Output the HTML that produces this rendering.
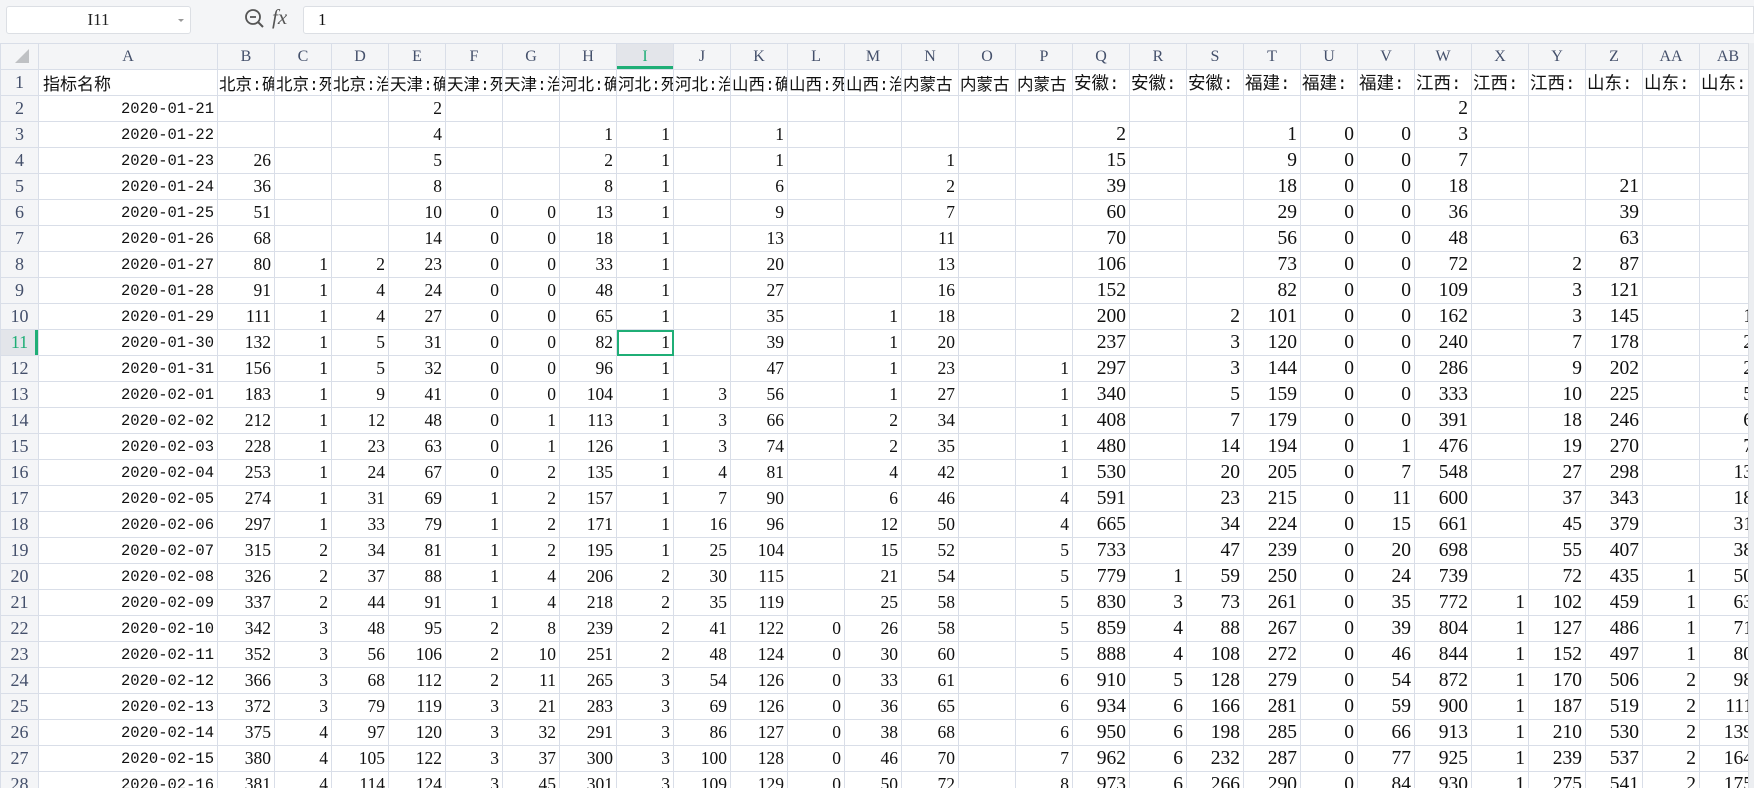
<!DOCTYPE html>
<html><head><meta charset="utf-8">
<style>
*{margin:0;padding:0;box-sizing:border-box}
body{width:1754px;height:788px;overflow:hidden;background:#f4f5f7;position:relative;font-family:"Liberation Serif","Noto Serif CJK SC",serif}
.namebox{position:absolute;left:6px;top:6px;width:185px;height:28px;background:#fff;border:1px solid #dcdfe4;border-radius:3px;font:17px "Liberation Serif",serif;text-align:center;line-height:26px;color:#222}
.namebox .arr{position:absolute;right:6px;top:12px;width:0;height:0;border-left:3px solid transparent;border-right:3px solid transparent;border-top:3px solid #999}
.fx{position:absolute;left:272px;top:5px;font:italic 21px "Liberation Serif",serif;color:#555}
.fbox{position:absolute;left:303px;top:6px;right:0;height:28px;background:#fff;border:1px solid #dcdfe4;border-radius:3px 0 0 3px;font:17px "Liberation Serif",serif;line-height:26px;padding-left:14px;color:#111}
.grid{position:absolute;left:0;top:43px;width:1748px;height:745px;overflow:hidden;background:#fff}
table{border-collapse:collapse;table-layout:fixed;width:1756px}
tr{height:26px}
td,th{border:1px solid #d9dee8;padding:0 3px;white-space:nowrap;overflow:hidden;text-align:right;font:17.5px "Liberation Serif",serif;color:#111;height:26px}
th{background:#f4f5f7;font-weight:normal;text-align:center;color:#44506b;font-size:18px}
thead th{font-size:16px}
td:nth-child(2){font:15.5px "Liberation Mono",monospace}
td:nth-child(n+18){font-size:19.5px}
tr.h td{text-align:left;font:16.5px "Liberation Mono","Noto Sans CJK SC",monospace;padding:0 1px}
tr.h td:nth-child(n+18){font:17.5px "Liberation Mono","Noto Sans CJK SC",monospace}
tr.h td:nth-child(2){font:17px "Liberation Sans","Noto Sans CJK SC",sans-serif;padding-left:4px}
th.sel{background:#e3e5ea;color:#1fae76}
thead th.sel{box-shadow:inset 0 -3px 0 #1fae76}
tbody th.sel{box-shadow:inset -3px 0 0 #1fae76}
td.cur{outline:2px solid #1fae76;outline-offset:-2px;position:relative}
.corner{position:absolute;left:14px;top:5px;width:0;height:0;border-left:14px solid transparent;border-bottom:14px solid #bfc1c4}
.sb{position:absolute;left:1748px;top:43px;width:6px;height:745px;background:#eceef1;border-left:1px solid #dcdfe4}
</style></head><body>
<div class="namebox">I11<span class="arr"></span></div>
<svg style="position:absolute;left:244px;top:8px" width="22" height="22" viewBox="0 0 22 22"><circle cx="9" cy="9" r="7" fill="none" stroke="#555" stroke-width="1.8"/><line x1="6" y1="9" x2="12" y2="9" stroke="#555" stroke-width="1.8"/><line x1="14" y1="14" x2="19" y2="19" stroke="#555" stroke-width="2"/></svg>
<div class="fx">fx</div>
<div class="fbox">1</div>
<div class="grid">
<table>
<colgroup><col style="width:38px"><col style="width:179px"><col span="27" style="width:57px"></colgroup>
<thead><tr><th style="position:relative"><span class="corner"></span></th><th>A</th><th>B</th><th>C</th><th>D</th><th>E</th><th>F</th><th>G</th><th>H</th><th class="sel">I</th><th>J</th><th>K</th><th>L</th><th>M</th><th>N</th><th>O</th><th>P</th><th>Q</th><th>R</th><th>S</th><th>T</th><th>U</th><th>V</th><th>W</th><th>X</th><th>Y</th><th>Z</th><th>AA</th><th>AB</th></tr></thead>
<tbody>
<tr class="h"><th>1</th><td>指标名称</td><td>北京:确诊</td><td>北京:死亡</td><td>北京:治愈</td><td>天津:确诊</td><td>天津:死亡</td><td>天津:治愈</td><td>河北:确诊</td><td>河北:死亡</td><td>河北:治愈</td><td>山西:确诊</td><td>山西:死亡</td><td>山西:治愈</td><td>内蒙古</td><td>内蒙古</td><td>内蒙古</td><td>安徽:</td><td>安徽:</td><td>安徽:</td><td>福建:</td><td>福建:</td><td>福建:</td><td>江西:</td><td>江西:</td><td>江西:</td><td>山东:</td><td>山东:</td><td>山东:</td></tr>
<tr><th>2</th><td>2020-01-21</td><td></td><td></td><td></td><td>2</td><td></td><td></td><td></td><td></td><td></td><td></td><td></td><td></td><td></td><td></td><td></td><td></td><td></td><td></td><td></td><td></td><td></td><td>2</td><td></td><td></td><td></td><td></td><td></td></tr>
<tr><th>3</th><td>2020-01-22</td><td></td><td></td><td></td><td>4</td><td></td><td></td><td>1</td><td>1</td><td></td><td>1</td><td></td><td></td><td></td><td></td><td></td><td>2</td><td></td><td></td><td>1</td><td>0</td><td>0</td><td>3</td><td></td><td></td><td></td><td></td><td></td></tr>
<tr><th>4</th><td>2020-01-23</td><td>26</td><td></td><td></td><td>5</td><td></td><td></td><td>2</td><td>1</td><td></td><td>1</td><td></td><td></td><td>1</td><td></td><td></td><td>15</td><td></td><td></td><td>9</td><td>0</td><td>0</td><td>7</td><td></td><td></td><td></td><td></td><td></td></tr>
<tr><th>5</th><td>2020-01-24</td><td>36</td><td></td><td></td><td>8</td><td></td><td></td><td>8</td><td>1</td><td></td><td>6</td><td></td><td></td><td>2</td><td></td><td></td><td>39</td><td></td><td></td><td>18</td><td>0</td><td>0</td><td>18</td><td></td><td></td><td>21</td><td></td><td></td></tr>
<tr><th>6</th><td>2020-01-25</td><td>51</td><td></td><td></td><td>10</td><td>0</td><td>0</td><td>13</td><td>1</td><td></td><td>9</td><td></td><td></td><td>7</td><td></td><td></td><td>60</td><td></td><td></td><td>29</td><td>0</td><td>0</td><td>36</td><td></td><td></td><td>39</td><td></td><td></td></tr>
<tr><th>7</th><td>2020-01-26</td><td>68</td><td></td><td></td><td>14</td><td>0</td><td>0</td><td>18</td><td>1</td><td></td><td>13</td><td></td><td></td><td>11</td><td></td><td></td><td>70</td><td></td><td></td><td>56</td><td>0</td><td>0</td><td>48</td><td></td><td></td><td>63</td><td></td><td></td></tr>
<tr><th>8</th><td>2020-01-27</td><td>80</td><td>1</td><td>2</td><td>23</td><td>0</td><td>0</td><td>33</td><td>1</td><td></td><td>20</td><td></td><td></td><td>13</td><td></td><td></td><td>106</td><td></td><td></td><td>73</td><td>0</td><td>0</td><td>72</td><td></td><td>2</td><td>87</td><td></td><td></td></tr>
<tr><th>9</th><td>2020-01-28</td><td>91</td><td>1</td><td>4</td><td>24</td><td>0</td><td>0</td><td>48</td><td>1</td><td></td><td>27</td><td></td><td></td><td>16</td><td></td><td></td><td>152</td><td></td><td></td><td>82</td><td>0</td><td>0</td><td>109</td><td></td><td>3</td><td>121</td><td></td><td></td></tr>
<tr><th>10</th><td>2020-01-29</td><td>111</td><td>1</td><td>4</td><td>27</td><td>0</td><td>0</td><td>65</td><td>1</td><td></td><td>35</td><td></td><td>1</td><td>18</td><td></td><td></td><td>200</td><td></td><td>2</td><td>101</td><td>0</td><td>0</td><td>162</td><td></td><td>3</td><td>145</td><td></td><td>1</td></tr>
<tr><th class="sel">11</th><td>2020-01-30</td><td>132</td><td>1</td><td>5</td><td>31</td><td>0</td><td>0</td><td>82</td><td class="cur">1</td><td></td><td>39</td><td></td><td>1</td><td>20</td><td></td><td></td><td>237</td><td></td><td>3</td><td>120</td><td>0</td><td>0</td><td>240</td><td></td><td>7</td><td>178</td><td></td><td>2</td></tr>
<tr><th>12</th><td>2020-01-31</td><td>156</td><td>1</td><td>5</td><td>32</td><td>0</td><td>0</td><td>96</td><td>1</td><td></td><td>47</td><td></td><td>1</td><td>23</td><td></td><td>1</td><td>297</td><td></td><td>3</td><td>144</td><td>0</td><td>0</td><td>286</td><td></td><td>9</td><td>202</td><td></td><td>2</td></tr>
<tr><th>13</th><td>2020-02-01</td><td>183</td><td>1</td><td>9</td><td>41</td><td>0</td><td>0</td><td>104</td><td>1</td><td>3</td><td>56</td><td></td><td>1</td><td>27</td><td></td><td>1</td><td>340</td><td></td><td>5</td><td>159</td><td>0</td><td>0</td><td>333</td><td></td><td>10</td><td>225</td><td></td><td>5</td></tr>
<tr><th>14</th><td>2020-02-02</td><td>212</td><td>1</td><td>12</td><td>48</td><td>0</td><td>1</td><td>113</td><td>1</td><td>3</td><td>66</td><td></td><td>2</td><td>34</td><td></td><td>1</td><td>408</td><td></td><td>7</td><td>179</td><td>0</td><td>0</td><td>391</td><td></td><td>18</td><td>246</td><td></td><td>6</td></tr>
<tr><th>15</th><td>2020-02-03</td><td>228</td><td>1</td><td>23</td><td>63</td><td>0</td><td>1</td><td>126</td><td>1</td><td>3</td><td>74</td><td></td><td>2</td><td>35</td><td></td><td>1</td><td>480</td><td></td><td>14</td><td>194</td><td>0</td><td>1</td><td>476</td><td></td><td>19</td><td>270</td><td></td><td>7</td></tr>
<tr><th>16</th><td>2020-02-04</td><td>253</td><td>1</td><td>24</td><td>67</td><td>0</td><td>2</td><td>135</td><td>1</td><td>4</td><td>81</td><td></td><td>4</td><td>42</td><td></td><td>1</td><td>530</td><td></td><td>20</td><td>205</td><td>0</td><td>7</td><td>548</td><td></td><td>27</td><td>298</td><td></td><td>13</td></tr>
<tr><th>17</th><td>2020-02-05</td><td>274</td><td>1</td><td>31</td><td>69</td><td>1</td><td>2</td><td>157</td><td>1</td><td>7</td><td>90</td><td></td><td>6</td><td>46</td><td></td><td>4</td><td>591</td><td></td><td>23</td><td>215</td><td>0</td><td>11</td><td>600</td><td></td><td>37</td><td>343</td><td></td><td>18</td></tr>
<tr><th>18</th><td>2020-02-06</td><td>297</td><td>1</td><td>33</td><td>79</td><td>1</td><td>2</td><td>171</td><td>1</td><td>16</td><td>96</td><td></td><td>12</td><td>50</td><td></td><td>4</td><td>665</td><td></td><td>34</td><td>224</td><td>0</td><td>15</td><td>661</td><td></td><td>45</td><td>379</td><td></td><td>31</td></tr>
<tr><th>19</th><td>2020-02-07</td><td>315</td><td>2</td><td>34</td><td>81</td><td>1</td><td>2</td><td>195</td><td>1</td><td>25</td><td>104</td><td></td><td>15</td><td>52</td><td></td><td>5</td><td>733</td><td></td><td>47</td><td>239</td><td>0</td><td>20</td><td>698</td><td></td><td>55</td><td>407</td><td></td><td>38</td></tr>
<tr><th>20</th><td>2020-02-08</td><td>326</td><td>2</td><td>37</td><td>88</td><td>1</td><td>4</td><td>206</td><td>2</td><td>30</td><td>115</td><td></td><td>21</td><td>54</td><td></td><td>5</td><td>779</td><td>1</td><td>59</td><td>250</td><td>0</td><td>24</td><td>739</td><td></td><td>72</td><td>435</td><td>1</td><td>50</td></tr>
<tr><th>21</th><td>2020-02-09</td><td>337</td><td>2</td><td>44</td><td>91</td><td>1</td><td>4</td><td>218</td><td>2</td><td>35</td><td>119</td><td></td><td>25</td><td>58</td><td></td><td>5</td><td>830</td><td>3</td><td>73</td><td>261</td><td>0</td><td>35</td><td>772</td><td>1</td><td>102</td><td>459</td><td>1</td><td>63</td></tr>
<tr><th>22</th><td>2020-02-10</td><td>342</td><td>3</td><td>48</td><td>95</td><td>2</td><td>8</td><td>239</td><td>2</td><td>41</td><td>122</td><td>0</td><td>26</td><td>58</td><td></td><td>5</td><td>859</td><td>4</td><td>88</td><td>267</td><td>0</td><td>39</td><td>804</td><td>1</td><td>127</td><td>486</td><td>1</td><td>71</td></tr>
<tr><th>23</th><td>2020-02-11</td><td>352</td><td>3</td><td>56</td><td>106</td><td>2</td><td>10</td><td>251</td><td>2</td><td>48</td><td>124</td><td>0</td><td>30</td><td>60</td><td></td><td>5</td><td>888</td><td>4</td><td>108</td><td>272</td><td>0</td><td>46</td><td>844</td><td>1</td><td>152</td><td>497</td><td>1</td><td>80</td></tr>
<tr><th>24</th><td>2020-02-12</td><td>366</td><td>3</td><td>68</td><td>112</td><td>2</td><td>11</td><td>265</td><td>3</td><td>54</td><td>126</td><td>0</td><td>33</td><td>61</td><td></td><td>6</td><td>910</td><td>5</td><td>128</td><td>279</td><td>0</td><td>54</td><td>872</td><td>1</td><td>170</td><td>506</td><td>2</td><td>98</td></tr>
<tr><th>25</th><td>2020-02-13</td><td>372</td><td>3</td><td>79</td><td>119</td><td>3</td><td>21</td><td>283</td><td>3</td><td>69</td><td>126</td><td>0</td><td>36</td><td>65</td><td></td><td>6</td><td>934</td><td>6</td><td>166</td><td>281</td><td>0</td><td>59</td><td>900</td><td>1</td><td>187</td><td>519</td><td>2</td><td>111</td></tr>
<tr><th>26</th><td>2020-02-14</td><td>375</td><td>4</td><td>97</td><td>120</td><td>3</td><td>32</td><td>291</td><td>3</td><td>86</td><td>127</td><td>0</td><td>38</td><td>68</td><td></td><td>6</td><td>950</td><td>6</td><td>198</td><td>285</td><td>0</td><td>66</td><td>913</td><td>1</td><td>210</td><td>530</td><td>2</td><td>139</td></tr>
<tr><th>27</th><td>2020-02-15</td><td>380</td><td>4</td><td>105</td><td>122</td><td>3</td><td>37</td><td>300</td><td>3</td><td>100</td><td>128</td><td>0</td><td>46</td><td>70</td><td></td><td>7</td><td>962</td><td>6</td><td>232</td><td>287</td><td>0</td><td>77</td><td>925</td><td>1</td><td>239</td><td>537</td><td>2</td><td>164</td></tr>
<tr><th>28</th><td>2020-02-16</td><td>381</td><td>4</td><td>114</td><td>124</td><td>3</td><td>45</td><td>301</td><td>3</td><td>109</td><td>129</td><td>0</td><td>50</td><td>72</td><td></td><td>8</td><td>973</td><td>6</td><td>266</td><td>290</td><td>0</td><td>84</td><td>930</td><td>1</td><td>275</td><td>541</td><td>2</td><td>175</td></tr>
</tbody></table>
</div>
<div class="sb"></div>
</body></html>
